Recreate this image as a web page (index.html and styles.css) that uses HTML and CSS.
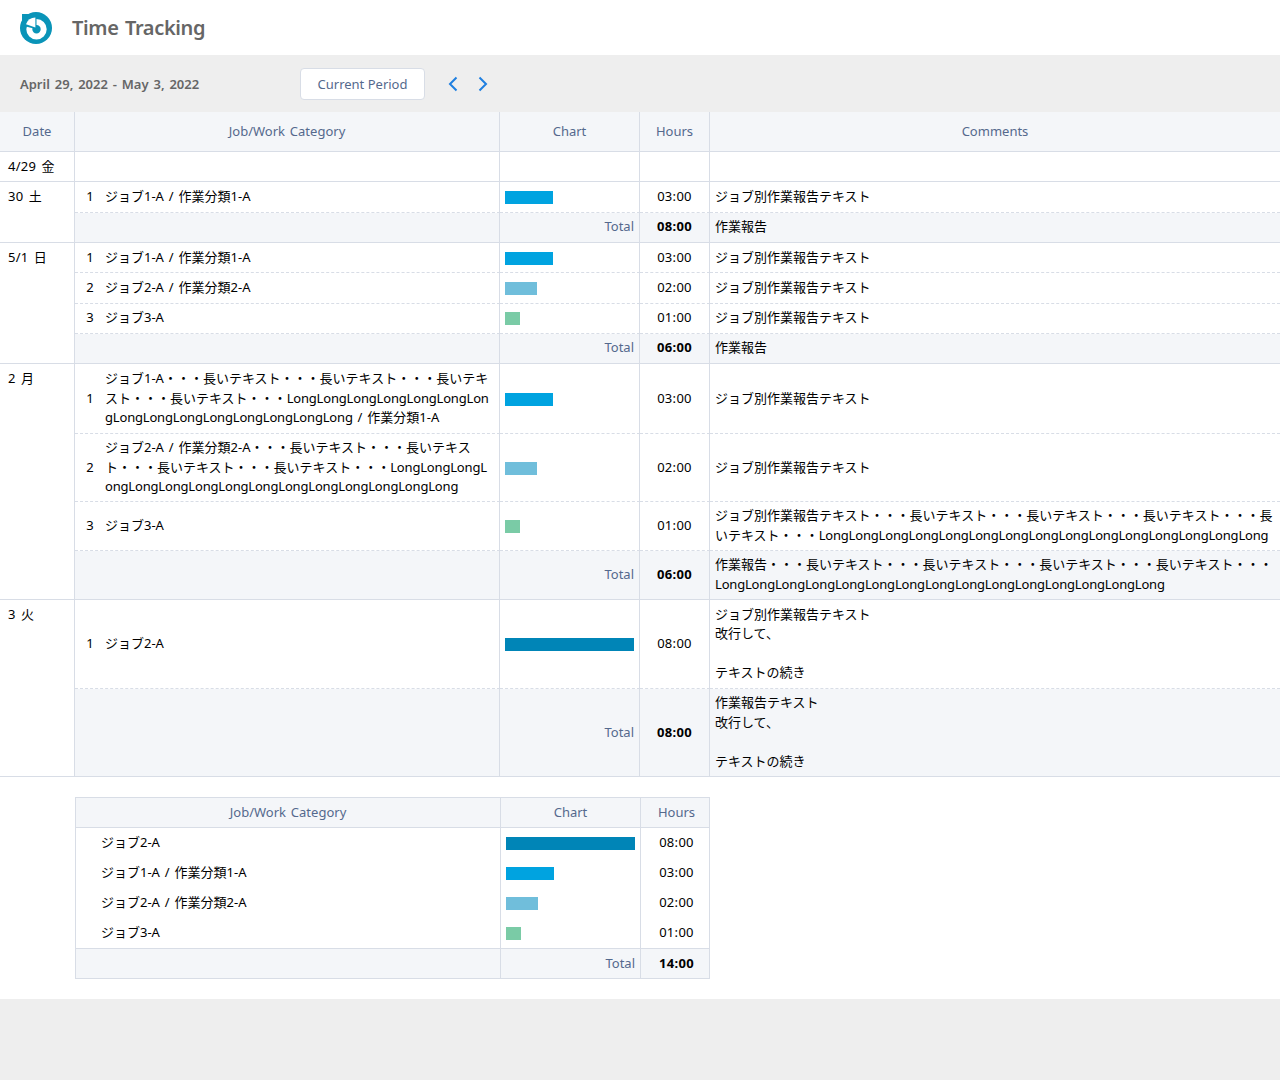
FILE: index.html
```html
<!DOCTYPE html>
<html lang="ja">
<head>
  <meta charset="UTF-8" />
  <title>Time Tracking</title>
  <link rel="stylesheet" href="styles.css">
</head>
<body>

<header class="page-header">
  <svg class="logo" viewBox="0 0 32 32" width="32" height="32">
    <circle cx="16" cy="16" r="16" fill="#0a94b8"/>
    <circle cx="16.5" cy="17.2" r="7.2" fill="#0a94b8" stroke="#fff" stroke-width="6"/>
    <path d="M16.5 17.2V2H2V13.5Z" fill="#0a94b8"/>
    <path d="M15.4 15.4V5.6A10 10 0 0 0 6 12.2Z" fill="#fff"/>
  </svg>
  <h1 class="page-title">Time Tracking</h1>
</header>

<div class="toolbar">
  <span class="period">April 29, 2022 - May 3, 2022</span>
  <button class="period-btn">Current Period</button>
  <div class="nav-arrows">
    <svg viewBox="0 0 10 16" width="10" height="16"><path d="M8.5 1.5L2 8l6.5 6.5" fill="none" stroke="#1f7fe0" stroke-width="2"/></svg>
    <svg viewBox="0 0 10 16" width="10" height="16"><path d="M1.5 1.5L8 8l-6.5 6.5" fill="none" stroke="#1f7fe0" stroke-width="2"/></svg>
  </div>
</div>

<main class="content">
  <table class="report">
    <colgroup>
      <col class="c-date"><col class="c-job"><col class="c-chart"><col class="c-hours"><col>
    </colgroup>
    <thead>
      <tr><th>Date</th><th>Job/Work Category</th><th>Chart</th><th>Hours</th><th>Comments</th></tr>
    </thead>
    <tbody>
      <tr class="day-end">
        <td class="date">4/29 金</td><td></td><td></td><td></td><td></td>
      </tr>

      <tr>
        <td class="date day-end-cell" rowspan="2">30 土</td>
        <td><div class="job"><span class="num">1</span><span class="name">ジョブ1-A / 作業分類1-A</span></div></td>
        <td><div class="bar bar-a"></div></td>
        <td class="hours">03:00</td>
        <td class="comment">ジョブ別作業報告テキスト</td>
      </tr>
      <tr class="total day-end">
        <td></td><td class="total-label">Total</td><td class="hours">08:00</td><td class="comment">作業報告</td>
      </tr>

      <tr>
        <td class="date day-end-cell" rowspan="4">5/1 日</td>
        <td><div class="job"><span class="num">1</span><span class="name">ジョブ1-A / 作業分類1-A</span></div></td>
        <td><div class="bar bar-a"></div></td>
        <td class="hours">03:00</td>
        <td class="comment">ジョブ別作業報告テキスト</td>
      </tr>
      <tr>
        <td><div class="job"><span class="num">2</span><span class="name">ジョブ2-A / 作業分類2-A</span></div></td>
        <td><div class="bar bar-b"></div></td>
        <td class="hours">02:00</td>
        <td class="comment">ジョブ別作業報告テキスト</td>
      </tr>
      <tr class="raised">
        <td><div class="job"><span class="num">3</span><span class="name">ジョブ3-A</span></div></td>
        <td><div class="bar bar-c"></div></td>
        <td class="hours">01:00</td>
        <td class="comment">ジョブ別作業報告テキスト</td>
      </tr>
      <tr class="total day-end">
        <td></td><td class="total-label">Total</td><td class="hours">06:00</td><td class="comment">作業報告</td>
      </tr>

      <tr class="row-first-long">
        <td class="date day-end-cell" rowspan="4">2 月</td>
        <td><div class="job"><span class="num">1</span><span class="name">ジョブ1-A・・・長いテキスト・・・長いテキスト・・・長いテキスト・・・長いテキスト・・・<span class="long">LongLongLongLongLongLongLongLongLongLongLongLongLongLongLong</span> / 作業分類1-A</span></div></td>
        <td><div class="bar bar-a"></div></td>
        <td class="hours">03:00</td>
        <td class="comment">ジョブ別作業報告テキスト</td>
      </tr>
      <tr>
        <td><div class="job"><span class="num">2</span><span class="name">ジョブ2-A / 作業分類2-A・・・長いテキスト・・・長いテキスト・・・長いテキスト・・・長いテキスト・・・<span class="long">LongLongLongLongLongLongLongLongLongLongLongLongLongLongLong</span></span></div></td>
        <td><div class="bar bar-b"></div></td>
        <td class="hours">02:00</td>
        <td class="comment">ジョブ別作業報告テキスト</td>
      </tr>
      <tr class="raised">
        <td><div class="job"><span class="num">3</span><span class="name">ジョブ3-A</span></div></td>
        <td><div class="bar bar-c"></div></td>
        <td class="hours">01:00</td>
        <td class="comment">ジョブ別作業報告テキスト・・・長いテキスト・・・長いテキスト・・・長いテキスト・・・長いテキスト・・・<span class="long">LongLongLongLongLongLongLongLongLongLongLongLongLongLongLong</span></td>
      </tr>
      <tr class="total day-end">
        <td></td><td class="total-label">Total</td><td class="hours">06:00</td>
        <td class="comment">作業報告・・・長いテキスト・・・長いテキスト・・・長いテキスト・・・長いテキスト・・・<span class="long">LongLongLongLongLongLongLongLongLongLongLongLongLongLongLong</span></td>
      </tr>

      <tr class="row-multi raised">
        <td class="date day-end-cell" rowspan="2">3 火</td>
        <td><div class="job"><span class="num">1</span><span class="name">ジョブ2-A</span></div></td>
        <td><div class="bar bar-d"></div></td>
        <td class="hours">08:00</td>
        <td class="comment">ジョブ別作業報告テキスト<br>改行して、<br><br>テキストの続き</td>
      </tr>
      <tr class="total day-end">
        <td></td><td class="total-label">Total</td><td class="hours">08:00</td>
        <td class="comment">作業報告テキスト<br>改行して、<br><br>テキストの続き</td>
      </tr>
    </tbody>
  </table>

  <table class="summary">
    <colgroup>
      <col class="s-job"><col class="c-chart"><col>
    </colgroup>
    <thead>
      <tr><th>Job/Work Category</th><th>Chart</th><th>Hours</th></tr>
    </thead>
    <tbody>
      <tr class="raised"><td class="s-name">ジョブ2-A</td><td><div class="bar bar-d"></div></td><td class="hours">08:00</td></tr>
      <tr class="raised"><td class="s-name">ジョブ1-A / 作業分類1-A</td><td><div class="bar bar-a"></div></td><td class="hours">03:00</td></tr>
      <tr class="raised"><td class="s-name">ジョブ2-A / 作業分類2-A</td><td><div class="bar bar-b"></div></td><td class="hours">02:00</td></tr>
      <tr class="raised"><td class="s-name">ジョブ3-A</td><td><div class="bar bar-c"></div></td><td class="hours">01:00</td></tr>
    </tbody>
    <tfoot>
      <tr class="total"><td></td><td class="total-label">Total</td><td class="hours">14:00</td></tr>
    </tfoot>
  </table>
</main>

</body>
</html>
```

FILE: styles.css
```css
body {
  margin: 0;
  background: #eeeeee;
  font-family: "Noto Sans", "Noto Sans CJK JP", sans-serif;
  font-size: 13px;
  line-height: 19.5px;
  word-spacing: 1.5px;
  color: #16325c;
}
.page-header {
  display: flex;
  align-items: center;
  height: 55px;
  padding-left: 20px;
  background: #fff;
}
.logo { flex: none; }
.page-title {
  margin: 0 0 0 20px;
  font-size: 20px;
  font-weight: 600;
  letter-spacing: -0.35px;
  color: #666;
}
.toolbar {
  display: flex;
  align-items: center;
  height: 57px;
  padding-left: 20px;
}
.period {
  width: 280px;
  padding-top: 2px;
  font-weight: 600;
  color: #666;
}
.period-btn {
  width: 125px;
  height: 32px;
  padding: 2px 0 0;
  background: #fff;
  border: 1px solid #d8dde6;
  border-radius: 4px;
  color: #54698d;
  font: inherit;
  word-spacing: 0;
}
.nav-arrows {
  display: flex;
  gap: 20px;
  margin-left: 23px;
}
.content {
  padding-bottom: 20px;
  background: #fff;
}
table {
  border-spacing: 0;
  table-layout: fixed;
  color: #000;
}
.report { width: 100%; }
.c-date { width: 75px; }
.c-job { width: 425px; }
.c-chart { width: 140px; }
.c-hours { width: 70px; }
th, td { box-sizing: border-box; }
th {
  height: 40px;
  padding: 0 5px;
  background: #f4f6f9;
  border-right: 1px solid #d8dde6;
  border-bottom: 1px solid #d8dde6;
  color: #54698d;
  font-weight: 400;
}
th:last-child { border-right: none; }
td {
  height: 30.33px;
  padding: 4.5px 5px;
  border-right: 1px solid #d8dde6;
  border-bottom: 1px dashed #d8dde6;
}
td:last-child { border-right: none; }
.row-first-long td { height: 69.7px; }
.row-multi td { height: 89px; }
.total td, .raised td { padding: 4px 5px 5px; }
.date, .raised .date {
  padding-top: 5px;
  padding-left: 8px;
  vertical-align: top;
  letter-spacing: 0.3px;
}
.day-end td, .day-end-cell { border-bottom: 1px solid #d8dde6; }
.job {
  display: flex;
  align-items: center;
}
.num {
  flex: none;
  width: 20px;
  text-align: center;
}
.name {
  margin-left: 5px;
  word-break: break-all;
}
.long { letter-spacing: -0.18px; }
.bar {
  height: 13px;
  margin-top: 1px;
}
.raised .bar { margin-top: 2px; }
.bar-a { width: 48px; background: #00a3e0; }
.bar-b { width: 32px; background: #70bedb; }
.bar-c { width: 15px; background: #7acba6; }
.bar-d { width: 100%; background: #0085b7; }
.hours {
  text-align: center;
  letter-spacing: 0.3px;
}
.comment { word-break: break-all; }
.total td { background: #f4f6f9; }
.total .hours { font-weight: 700; }
.total-label {
  text-align: right;
  color: #54698d;
}
.summary {
  width: 635px;
  margin: 20px 0 0 75px;
  border-top: 1px solid #d8dde6;
  border-left: 1px solid #d8dde6;
  border-right: 1px solid #d8dde6;
}
.s-job { width: 425px; }
.summary th { height: 30px; }
.summary td {
  height: 30px;
  border-bottom: none;
}
.summary th:last-child, .summary td:last-child { padding-left: 8px; }
.summary .raised .s-name { padding-left: 25px; }
.summary .total td {
  height: 31px;
  border-top: 1px solid #d8dde6;
  border-bottom: 1px solid #d8dde6;
}
```
